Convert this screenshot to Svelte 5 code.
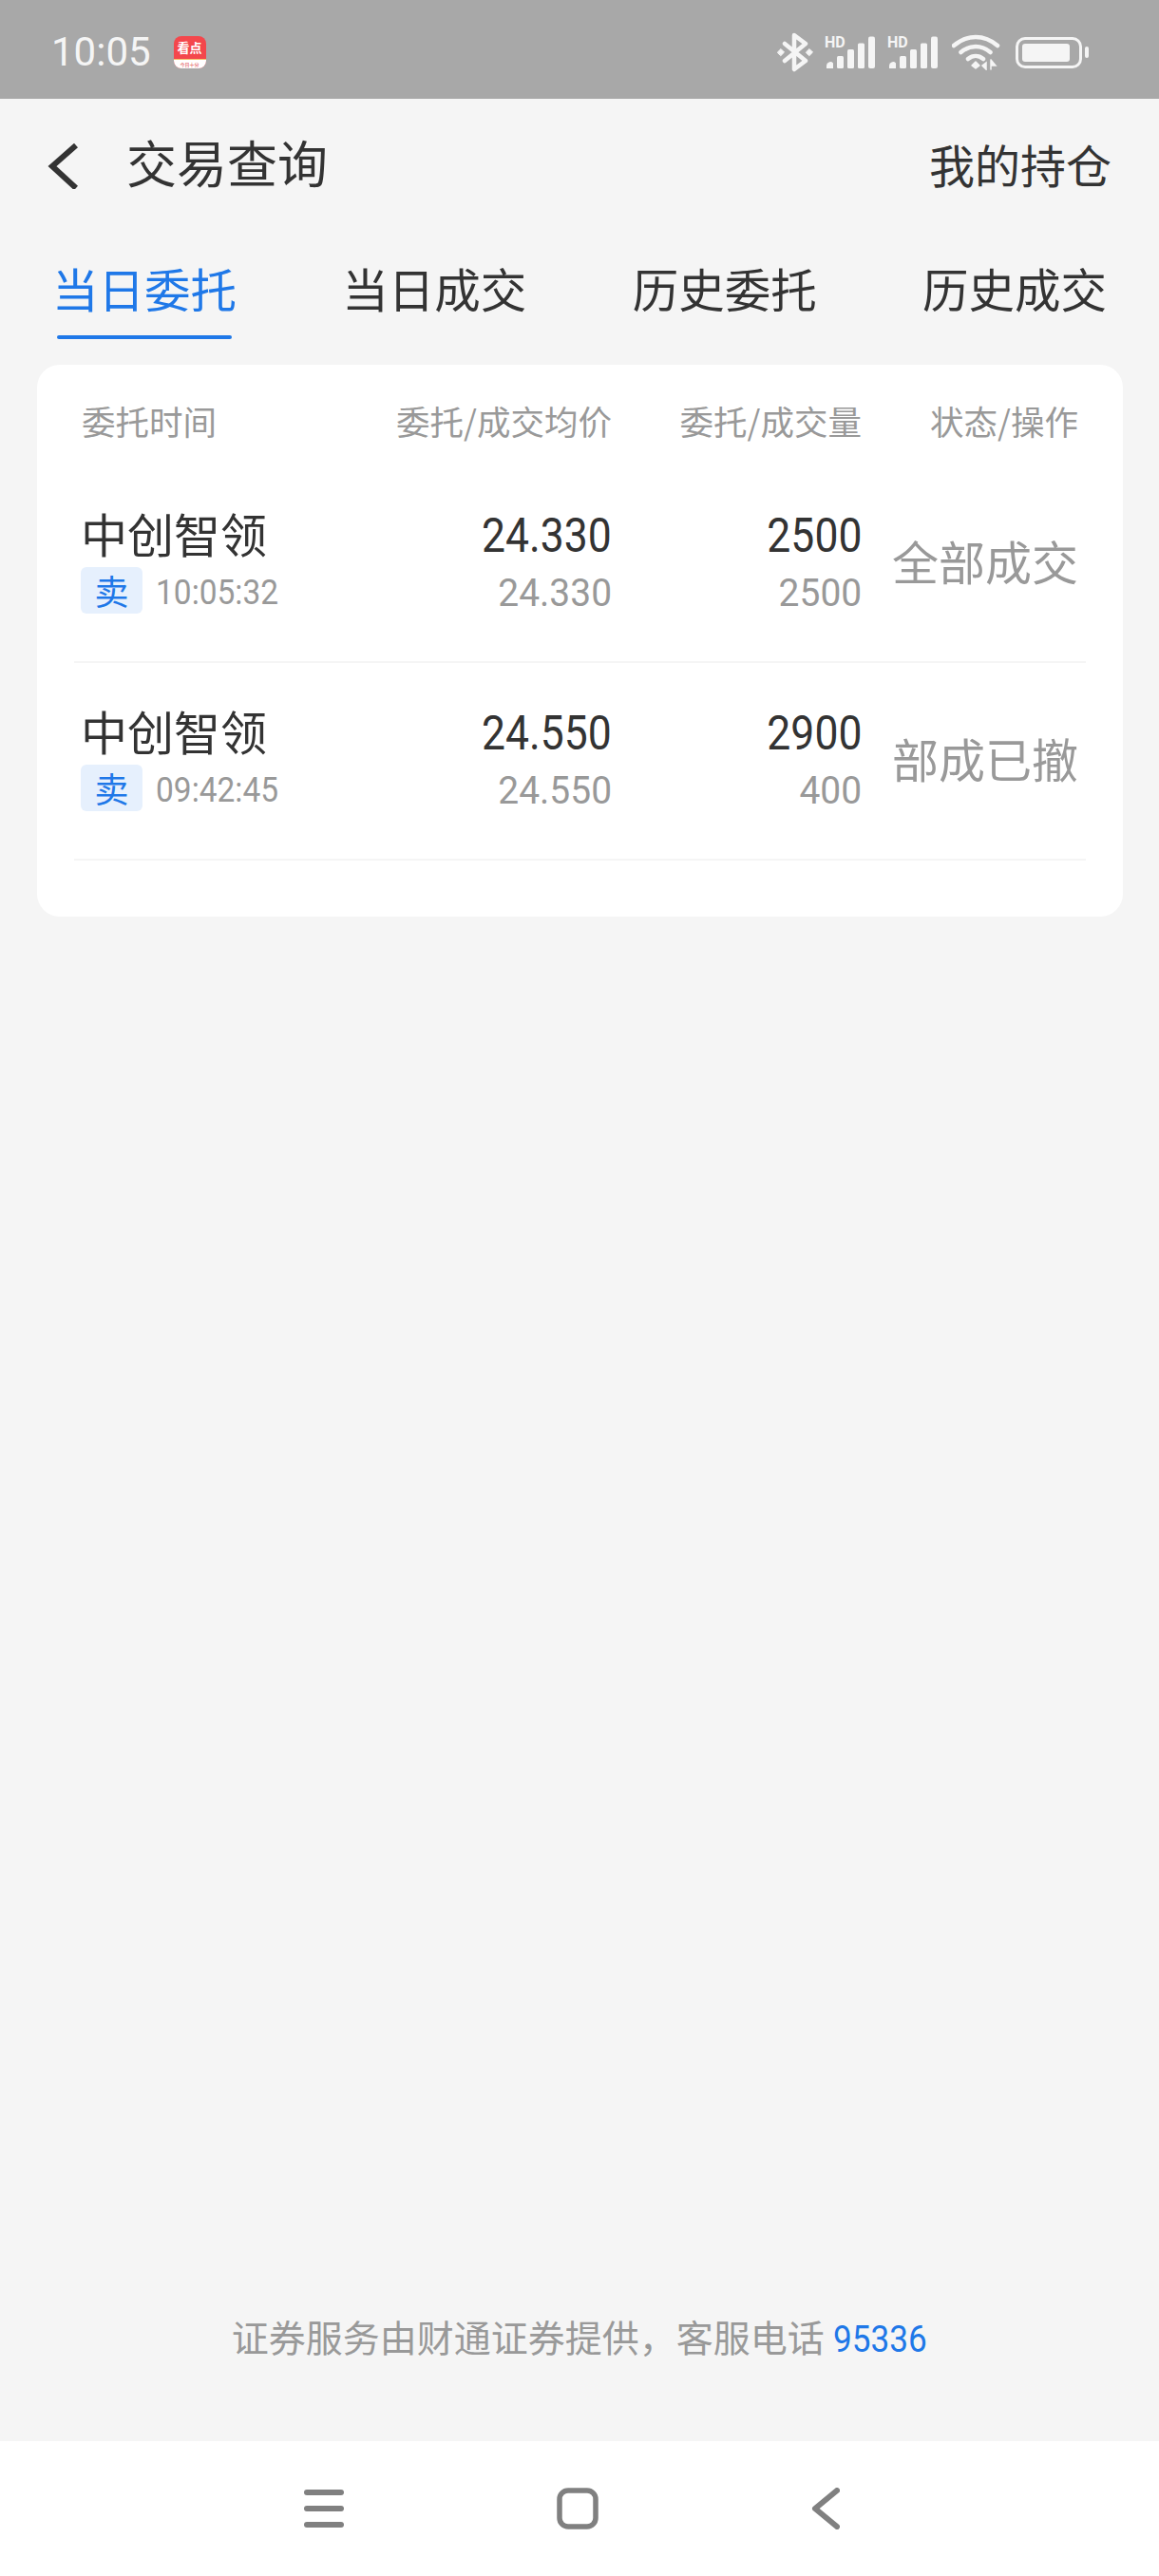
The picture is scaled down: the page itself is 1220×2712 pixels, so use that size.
<script lang="ts">
  const tabs = ['当日委托', '当日成交', '历史委托', '历史成交'];
  const columns = ['委托时间', '委托/成交均价', '委托/成交量', '状态/操作'];
  const orders = [
    { name: '中创智领', side: '卖', time: '10:05:32', price: '24.330', avg: '24.330', qty: '2500', done: '2500', status: '全部成交' },
    { name: '中创智领', side: '卖', time: '09:42:45', price: '24.550', avg: '24.550', qty: '2900', done: '400', status: '部成已撤' },
  ];
</script>

<div class="page">
  <div class="status-bar">
    <div class="status-left">
      <span class="clock">10:05</span>
      <div class="app-badge">
        <span class="app-badge-text">看点</span>
        <span class="app-badge-foot">今日十分</span>
      </div>
    </div>
    <div class="status-right">
      <svg width="38" height="42" viewBox="0 0 38 42" fill="none" stroke="#f5f5f5" stroke-width="4.500" stroke-linejoin="round" stroke-linecap="round">
        <path d="M8 12 L30 30 L18 39 L18 3 L30 12 L8 30" />
        <path d="M0.5 21 L4 17.5 L7.5 21 L4 24.5 Z M30.5 21 L34 17.5 L37.5 21 L34 24.5 Z" fill="#f5f5f5" stroke-width="1" />
      </svg>
      {#each [0, 1] as s}
        <div class="signal">
          <span class="hd">HD</span>
          <svg width="55" height="34" viewBox="0 0 55 34" fill="#f5f5f5">
            <path d="M3 34 v-3 a4 4 0 0 1 7 -2.500 V34 Z" />
            <rect x="14" y="21" width="7" height="13" rx="1.500" />
            <rect x="25" y="14" width="7" height="20" rx="1.500" />
            <rect x="36" y="7.500" width="7" height="26.500" rx="1.500" />
            <rect x="47" y="0.500" width="7" height="33.500" rx="2" />
          </svg>
        </div>
      {/each}
      <svg class="wifi" width="52" height="38" viewBox="0 0 52 38" fill="none" stroke="#f5f5f5" stroke-width="4.500" stroke-linecap="round">
        <path d="M2 12 C16 0 34 0 48 12" />
        <path d="M9.500 19 C19 11 31 11 40.500 19" />
        <path d="M17 26 C22 22 28 22 33 26" />
        <path d="M25 29 L29 33 L25 36 L21 33 Z" fill="#f5f5f5" stroke-width="1.500" stroke-linejoin="round" />
        <path d="M36 30 L36 37 L32 33 Z M41 27 L41 37 M41 27 L46 33 L41 33" fill="#f5f5f5" stroke-width="1.500" />
      </svg>
      <div class="battery">
        <div class="battery-shell"><div class="battery-level"></div></div>
        <div class="battery-cap"></div>
      </div>
    </div>
  </div>

  <div class="topbar">
    <div class="topbar-left">
      <svg class="back" width="32" height="48" viewBox="0 0 32 48" fill="none" stroke="#333" stroke-width="6">
        <path d="M30 2 L5 24 L30 47" />
      </svg>
      <span class="title">交易查询</span>
    </div>
    <span class="holdings">我的持仓</span>
  </div>

  <div class="tabs">
    {#each tabs as tab, i}
      <div class="tab" class:active={i === 0}>{tab}</div>
    {/each}
  </div>

  <div class="card">
    <div class="grid head">
      {#each columns as col}
        <div>{col}</div>
      {/each}
    </div>
    {#each orders as o}
      <div class="grid row">
        <div class="cell-name">
          <div class="name">{o.name}</div>
          <div class="meta">
            <span class="side">{o.side}</span>
            <span class="num time">{o.time}</span>
          </div>
        </div>
        <div class="cell-num">
          <span class="num big">{o.price}</span>
          <span class="num small">{o.avg}</span>
        </div>
        <div class="cell-num">
          <span class="num big">{o.qty}</span>
          <span class="num small">{o.done}</span>
        </div>
        <div class="status">{o.status}</div>
      </div>
    {/each}
  </div>

  <div class="footer">证券服务由财通证券提供，客服电话 <span class="phone">95336</span></div>

  <div class="navbar">
    <svg width="42" height="40" viewBox="0 0 42 40" fill="#808080">
      <rect x="0" y="0" width="42" height="6" rx="3" />
      <rect x="0" y="17" width="42" height="6" rx="3" />
      <rect x="0" y="34" width="42" height="6" rx="3" />
    </svg>
    <svg width="44" height="44" viewBox="0 0 44 44" fill="none" stroke="#808080" stroke-width="5.500">
      <rect x="3" y="3" width="38" height="38" rx="9" />
    </svg>
    <svg width="30" height="44" viewBox="0 0 30 44" fill="none" stroke="#808080" stroke-width="6" stroke-linecap="round" stroke-linejoin="round">
      <path d="M27 3 L4 22 L27 41" />
    </svg>
  </div>
</div>

<style>
  :global(body) { margin: 0; background: #f5f5f5; }

  .page {
    width: 1220px;
    height: 2712px;
    display: flex;
    flex-direction: column;
    background: #f5f5f5;
    font-family: "Noto Sans CJK SC", "Noto Sans", sans-serif;
    overflow: hidden;
  }

  /* 状态栏 */
  .status-bar {
    height: 104px;
    flex: none;
    background: #a8a8a8;
    display: flex;
    align-items: center;
    justify-content: space-between;
    padding: 6px 74px 0 54px;
    box-sizing: border-box;
  }
  .status-left { display: flex; align-items: center; gap: 24px; }
  .clock { font: 400 42px/1 Roboto, sans-serif; color: #f5f5f5; }
  .app-badge {
    width: 34px;
    height: 34px;
    border-radius: 8px;
    overflow: hidden;
    background: #f4474c;
    display: flex;
    flex-direction: column;
    align-items: center;
  }
  .app-badge-text { font-size: 13px; line-height: 24px; font-weight: 700; color: #fff; white-space: nowrap; }
  .app-badge-foot {
    flex: 1;
    align-self: stretch;
    background: #fff;
    border-top: 1px solid #f3c26b;
    font-size: 5px;
    line-height: 9px;
    color: #e0474c;
    text-align: center;
    white-space: nowrap;
  }
  .status-right { display: flex; align-items: center; gap: 11px; }
  .signal { position: relative; width: 55px; height: 34px; }
  .signal svg { display: block; }
  .hd {
    position: absolute;
    left: 1px;
    top: 0;
    font: 700 16px/14px Roboto, sans-serif;
    color: #f5f5f5;
  }
  .wifi { margin-left: 3px; }
  .battery { display: flex; align-items: center; gap: 3px; margin-left: 4px; }
  .battery-shell {
    width: 70px;
    height: 33px;
    border: 3px solid #f5f5f5;
    border-radius: 10px;
    box-sizing: border-box;
    padding: 4px;
  }
  .battery-level { width: 50px; height: 100%; background: #f5f5f5; border-radius: 3px; }
  .battery-cap { width: 4px; height: 12px; background: #f5f5f5; border-radius: 2px; }

  /* 顶栏 */
  .topbar {
    height: 136px;
    flex: none;
    display: flex;
    align-items: center;
    justify-content: space-between;
    padding: 0 50px 0 50px;
    box-sizing: border-box;
  }
  .topbar-left { display: flex; align-items: center; gap: 51px; }
  .back { position: relative; top: 3px; }
  .title { font-size: 53px; line-height: 60px; color: #333; margin-top: -4px; }
  .holdings { font-size: 48px; color: #333; }

  /* 标签页 */
  .tabs {
    display: flex;
    justify-content: space-between;
    padding: 0 55px 0 55px;
    flex: none;
  }
  .tab {
    position: relative;
    font-size: 48.500px;
    line-height: 60px;
    padding: 33px 0 52px;
    color: #333;
  }
  .tab.active { color: #1f78e8; }
  .tab.active::after {
    content: "";
    position: absolute;
    left: 5px;
    right: 5px;
    bottom: 28px;
    height: 4px;
    border-radius: 2px;
    background: #1f78e8;
  }

  /* 委托列表 */
  .card {
    margin: -1px 38px 0 39px;
    padding: 0 47px 59px;
    background: #fff;
    border-radius: 24px;
    flex: none;
  }
  .grid {
    display: grid;
    grid-template-columns: 300px 258px 263px 228px;
  }
  .head {
    height: 106px;
    padding-top: 10px;
    box-sizing: border-box;
    align-items: center;
    font-size: 35.500px;
    color: #999;
    text-align: right;
  }
  .head div:first-child { text-align: left; }
  .row {
    height: 208px;
    margin: 0 -8px;
    padding: 0 8px;
    box-sizing: border-box;
    border-bottom: 2px solid #f5f5f5;
    align-items: center;
  }
  .cell-name { display: flex; flex-direction: column; margin-top: -9px; }
  .name { font-size: 49px; line-height: 60px; color: #333; margin-left: -1px; }
  .meta { display: flex; align-items: center; gap: 14px; margin-top: 6px; }
  .side {
    width: 65px;
    height: 49px;
    line-height: 49px;
    margin-left: -1px;
    border-radius: 6px;
    background: #e6f0fd;
    color: #1f78e8;
    font-size: 36px;
    text-align: center;
    flex: none;
  }
  .cell-num {
    display: flex;
    flex-direction: column;
    align-items: flex-end;
    margin-top: -4px;
  }
  .num { font-family: Roboto, sans-serif; display: inline-block; transform-origin: right center; }
  .big { font-size: 50px; line-height: 60px; color: #333; transform: scaleX(0.89); }
  .small { font-size: 41px; line-height: 48px; margin-top: 6px; color: #999; transform: scaleX(0.95); }
  .time { font-size: 36px; color: #999; transform: scaleX(0.93); transform-origin: left center; position: relative; top: 2px; }
  .status { font-size: 49px; color: #999; text-align: right; margin-top: -7px; }

  /* 底部 */
  .footer {
    margin-top: auto;
    padding-bottom: 82px;
    text-align: center;
    font-size: 39px;
    line-height: 50px;
    color: #999;
  }
  .phone {
    font-family: Roboto, sans-serif;
    color: #1f78e8;
    font-size: 39px;
    display: inline-block;
    transform: scaleX(0.9);
    transform-origin: left center;
    margin-right: -10px;
  }

  .navbar {
    height: 142px;
    flex: none;
    background: #fff;
    display: grid;
    grid-template-columns: 42px 44px 30px;
    justify-content: center;
    column-gap: 224px;
    align-items: center;
    padding-right: 16px;
  }
</style>
